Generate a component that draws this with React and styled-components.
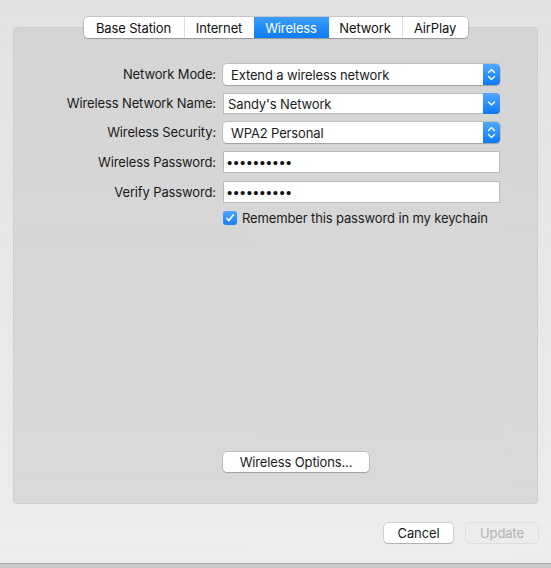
import React from "react";
import styled, { createGlobalStyle } from "styled-components";

const Global = createGlobalStyle`
  html, body { margin: 0; padding: 0; }
  body {
    font-family: Inter, "Liberation Sans", Arial, sans-serif;
    font-size: 13px;
    letter-spacing: -0.13px;
    color: #1b1b1b;
    -webkit-font-smoothing: antialiased;
  }
`;

const Window = styled.div`
  width: 551px;
  height: 568px;
  box-sizing: border-box;
  display: flex;
  flex-direction: column;
  padding-top: 17px;
  background: linear-gradient(#e2e2e2, #ededed);
  border-bottom: 4px solid #c9c9c9;
  box-shadow: inset 0 -1px 0 #a9a9a9;
  overflow: hidden;
`;

const TabBar = styled.div`
  align-self: center;
  display: flex;
  height: 21px;
  box-sizing: border-box;
  border-radius: 4px;
  background: #fff;
  box-shadow: 0 0 0 0.5px rgba(0, 0, 0, 0.25), 0 1px 1px rgba(0, 0, 0, 0.18);
  position: relative;
  z-index: 1;
  overflow: hidden;
`;

const Tab = styled.div`
  width: ${(p) => p.$w}px;
  display: flex;
  align-items: center;
  justify-content: center;
  box-sizing: border-box;
  border-left: ${(p) => (p.$first || p.$active || p.$afterActive ? "none" : "1px solid #dcdcdc")};
  color: ${(p) => (p.$active ? "#fff" : "#111")};
  background: ${(p) => (p.$active ? "linear-gradient(#3d9dfd, #0b7cf6)" : "transparent")};
`;

const Panel = styled.div`
  margin: -11px 13px 0;
  height: 477px;
  box-sizing: border-box;
  border-radius: 4px;
  background: linear-gradient(#d5d5d5, #d9d9d9);
  border: 1px solid #cdcdcd;
  display: flex;
  flex-direction: column;
  padding-top: 36px;
`;

const Form = styled.div`
  display: grid;
  grid-template-columns: 202px 277px;
  column-gap: 7px;
  row-gap: 8px;
  align-items: center;
`;

const Label = styled.div`
  text-align: right;
  line-height: 21px;
  color: #1a1a1a;
`;

const Popup = styled.div`
  height: 21px;
  display: flex;
  align-items: stretch;
  box-sizing: border-box;
  background: #fff;
  border-radius: 4px;
  box-shadow: 0 0 0 0.5px rgba(0, 0, 0, 0.22), 0 1px 1px rgba(0, 0, 0, 0.15);
  overflow: hidden;
`;

const Combo = styled.div`
  height: 21px;
  display: flex;
  align-items: stretch;
  box-sizing: border-box;
`;

const ComboField = styled.div`
  flex: 1;
  display: flex;
  align-items: center;
  padding-left: 4px;
  background: #fff;
  border: 1px solid #bdbdbd;
  border-right: none;
`;

const PopupText = styled.div`
  flex: 1;
  display: flex;
  align-items: center;
  padding-left: 8px;
`;

const Arrow = styled.div`
  width: 17px;
  display: flex;
  align-items: center;
  justify-content: center;
  background: linear-gradient(#52a8ff, #0a7af5);
  border-radius: ${(p) => (p.$combo ? "0 4px 4px 0" : "0")};
`;

const TextField = styled.div`
  height: 22px;
  box-sizing: border-box;
  background: #fff;
  border: 1px solid #b9b9b9;
  display: flex;
  align-items: center;
  padding-left: 3px;
`;

const Dots = styled.span`
  font-family: "Liberation Sans", sans-serif;
  font-size: 15px;
  letter-spacing: 1.3px;
  color: #111;
  line-height: 1;
`;

const CheckRow = styled.div`
  grid-column: 2;
  display: flex;
  align-items: center;
  gap: 5px;
  margin-top: -1px;
`;

const CheckBox = styled.div`
  width: 14px;
  height: 14px;
  border-radius: 3px;
  background: linear-gradient(#4ba3ff, #167ff7);
  display: flex;
  align-items: center;
  justify-content: center;
`;

const Spacer = styled.div`
  flex: 1;
`;

const PushButton = styled.div`
  height: 20px;
  width: ${(p) => p.$w}px;
  box-sizing: border-box;
  display: flex;
  align-items: center;
  justify-content: center;
  border-radius: 4px;
  background: ${(p) => (p.$disabled ? "#ececec" : "#fff")};
  color: ${(p) => (p.$disabled ? "#b3b3b3" : "#1a1a1a")};
  box-shadow: ${(p) =>
    p.$disabled
      ? "0 0 0 0.5px rgba(0,0,0,0.12)"
      : "0 0 0 0.5px rgba(0,0,0,0.25), 0 1px 1px rgba(0,0,0,0.15)"};
`;

const OptionsRow = styled.div`
  display: flex;
  padding-left: 209px;
  margin-bottom: 31px;
`;

const Footer = styled.div`
  display: flex;
  justify-content: flex-end;
  gap: 13px;
  padding: 19px 13px 0;
`;

const UpDown = () => (
  <svg width="9" height="13" viewBox="0 0 9 13">
    <path d="M1.5 4.5 L4.5 1.5 L7.5 4.5 M1.5 8.5 L4.5 11.5 L7.5 8.5" fill="none" stroke="#fff" strokeWidth="1.4" strokeLinecap="round" strokeLinejoin="round" />
  </svg>
);

const Down = () => (
  <svg width="9" height="7" viewBox="0 0 9 7">
    <path d="M1.5 2 L4.5 5 L7.5 2" fill="none" stroke="#fff" strokeWidth="1.4" strokeLinecap="round" strokeLinejoin="round" />
  </svg>
);

const Check = () => (
  <svg width="10" height="10" viewBox="0 0 10 10">
    <path d="M1.8 5.3 L4 7.6 L8.4 1.8" fill="none" stroke="#fff" strokeWidth="1.6" strokeLinecap="round" strokeLinejoin="round" />
  </svg>
);

const tabs = [
  { name: "Base Station", w: 100 },
  { name: "Internet", w: 70 },
  { name: "Wireless", w: 75 },
  { name: "Network", w: 73 },
  { name: "AirPlay", w: 66 },
];

export default function App() {
  const active = 2;
  return (
    <>
      <Global />
      <Window>
        <TabBar>
          {tabs.map((t, i) => (
            <Tab key={t.name} $w={t.w} $first={i === 0} $active={i === active} $afterActive={i === active + 1}>
              {t.name}
            </Tab>
          ))}
        </TabBar>
        <Panel>
          <Form>
            <Label>Network Mode:</Label>
            <Popup>
              <PopupText>Extend a wireless network</PopupText>
              <Arrow><UpDown /></Arrow>
            </Popup>

            <Label>Wireless Network Name:</Label>
            <Combo>
              <ComboField>Sandy's Network</ComboField>
              <Arrow $combo><Down /></Arrow>
            </Combo>

            <Label>Wireless Security:</Label>
            <Popup>
              <PopupText>WPA2 Personal</PopupText>
              <Arrow><UpDown /></Arrow>
            </Popup>

            <Label>Wireless Password:</Label>
            <TextField><Dots>••••••••••</Dots></TextField>

            <Label>Verify Password:</Label>
            <TextField><Dots>••••••••••</Dots></TextField>

            <CheckRow>
              <CheckBox><Check /></CheckBox>
              Remember this password in my keychain
            </CheckRow>
          </Form>
          <Spacer />
          <OptionsRow>
            <PushButton $w={146}>Wireless Options...</PushButton>
          </OptionsRow>
        </Panel>
        <Footer>
          <PushButton $w={69}>Cancel</PushButton>
          <PushButton $w={72} $disabled>Update</PushButton>
        </Footer>
      </Window>
    </>
  );
}
